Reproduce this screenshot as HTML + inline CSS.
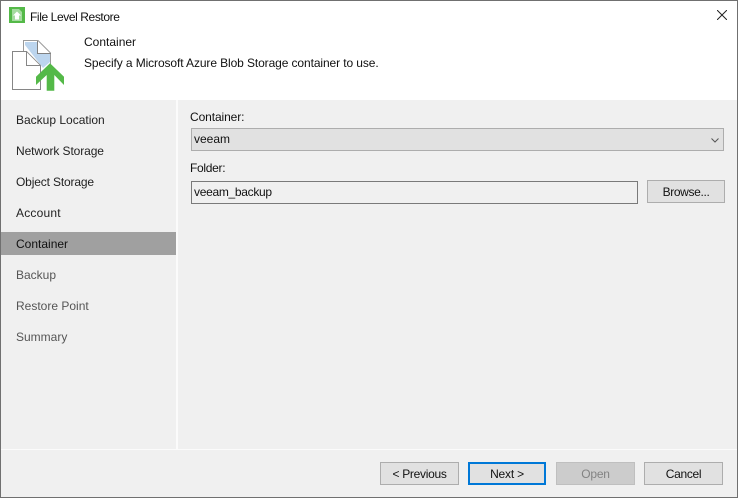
<!DOCTYPE html>
<html>
<head>
<meta charset="utf-8">
<style>
html,body{margin:0;padding:0;width:738px;height:498px;overflow:hidden;background:#f0f0f0}
body{position:relative;font-family:"Liberation Sans",sans-serif;font-size:12px;color:#111}
.a{position:absolute}
.t{position:absolute;white-space:nowrap;line-height:14px}
.btn{position:absolute;box-sizing:border-box;height:23px;width:79px;top:462px;background:#e1e1e1;border:1px solid #adadad;text-align:center;line-height:23px;letter-spacing:-.3px}
</style>
</head>
<body>
<div class="a" style="left:0;top:0;width:738px;height:100px;background:#fff"></div>
<div class="a" style="left:176px;top:100px;width:2px;height:349px;background:#fbfbfb"></div>
<div class="a" style="left:1px;top:449px;width:736px;height:1px;background:#fbfbfb"></div>
<div class="a" style="left:1px;top:232px;width:175px;height:23px;background:#a0a0a0"></div>

<svg class="a" style="left:9px;top:7px" width="16" height="16" viewBox="0 0 16 16">
<rect width="16" height="16" fill="#54b948"/>
<path d="M3 2H10L13 5V14H3Z" fill="#a5dba0"/>
<path d="M8 4.500L12 8.500H10V12.500H6V8.500H4Z" fill="#fff"/>
</svg>
<div class="t" style="left:30px;top:10px;letter-spacing:-.4px">File Level Restore</div>

<svg class="a" style="left:717px;top:10px" width="10" height="10" viewBox="0 0 10 10">
<path d="M0 0L10 10M10 0L0 10" stroke="#222" stroke-width="1" fill="none"/>
</svg>

<svg class="a" style="left:10px;top:38px" width="56" height="54" viewBox="0 0 56 54">
<path d="M13.500 13V2.500H28L40.500 15V26" fill="#fff" stroke="#9a9a9a"/>
<path d="M15 4H27V15H40V24L33 30L15 7Z" fill="#bcd5ee"/>
<path d="M27.500 3V15.500H41" fill="none" stroke="#808080"/>
<path d="M2.500 13.500H16.500L30.500 27.500V51.500H2.500Z" fill="#fff" stroke="#868686" stroke-width="1"/>
<path d="M16.500 14V27.500H30" fill="#fff" stroke="#868686"/>
<path d="M40 25.300L54 38.700V47L44.300 37V52.700H36.700V37L26 47V38.700Z" fill="#54b948"/>
</svg>

<div class="t" style="left:84px;top:35px">Container</div>
<div class="t" style="left:84px;top:56px;letter-spacing:-.1px">Specify a Microsoft Azure Blob Storage container to use.</div>

<div class="t" style="left:16px;top:113px;color:#222">Backup Location</div>
<div class="t" style="left:16px;top:144px;color:#222;letter-spacing:-.1px">Network Storage</div>
<div class="t" style="left:16px;top:175px;color:#222;letter-spacing:-.15px">Object Storage</div>
<div class="t" style="left:16px;top:206px;color:#222;letter-spacing:.2px">Account</div>
<div class="t" style="left:16px;top:237px;color:#111">Container</div>
<div class="t" style="left:16px;top:268px;color:#555">Backup</div>
<div class="t" style="left:16px;top:299px;color:#555">Restore Point</div>
<div class="t" style="left:16px;top:330px;color:#555">Summary</div>

<div class="t" style="left:190px;top:110px;letter-spacing:-.1px">Container:</div>
<div class="a" style="left:191px;top:128px;width:533px;height:23px;box-sizing:border-box;background:#e1e1e1;border:1px solid #adadad"></div>
<div class="t" style="left:194px;top:132px">veeam</div>
<svg class="a" style="left:711px;top:138px" width="8" height="5" viewBox="0 0 8 5">
<path d="M.5 .5L4 4L7.500 .5" fill="none" stroke="#555" stroke-width="1"/>
</svg>

<div class="t" style="left:190px;top:161px;letter-spacing:-.3px">Folder:</div>
<div class="a" style="left:191px;top:181px;width:447px;height:23px;box-sizing:border-box;background:#f0f0f0;border:1px solid #7a7a7a"></div>
<div class="t" style="left:194px;top:185px;letter-spacing:-.3px">veeam_backup</div>
<div class="btn" style="left:647px;top:180px;width:78px;letter-spacing:-.35px">Browse...</div>

<div class="btn" style="left:380px">&lt; Previous</div>
<div class="btn" style="left:468px;border:2px solid #0078d7;line-height:21px;letter-spacing:-.2px;width:78px">Next &gt;</div>
<div class="btn" style="left:556px;background:#ccc;border-color:#bfbfbf;color:#838383;letter-spacing:-.2px">Open</div>
<div class="btn" style="left:644px">Cancel</div>

<div class="a" style="left:0;top:0;width:738px;height:1px;background:#707070"></div>
<div class="a" style="left:0;top:497px;width:738px;height:1px;background:#707070"></div>
<div class="a" style="left:0;top:0;width:1px;height:498px;background:#707070"></div>
<div class="a" style="left:737px;top:0;width:1px;height:498px;background:#707070"></div>
</body>
</html>
